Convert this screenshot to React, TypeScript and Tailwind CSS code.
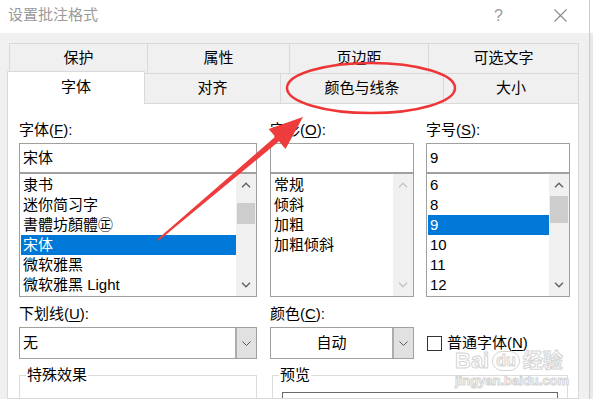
import type { ReactNode } from "react";

type Tab = { label: string; width: string };

const topTabs: Tab[] = [
  { label: "保护", width: "w-[138px]" },
  { label: "属性", width: "w-[142px]" },
  { label: "页边距", width: "w-[139px]" },
  { label: "可选文字", width: "w-[151px]" },
];

function Chevron({ up, disabled }: { up?: boolean; disabled?: boolean }) {
  return (
    <svg width="10" height="6" viewBox="0 0 10 6" aria-hidden="true">
      <polyline
        points={up ? "1,5.2 5,1.2 9,5.2" : "1,0.8 5,4.8 9,0.8"}
        fill="none"
        stroke={disabled ? "#c4c4c4" : "#606060"}
        strokeWidth="1.4"
      />
    </svg>
  );
}

function Scrollbar({
  disabled,
  thumbClass,
}: {
  disabled?: boolean;
  thumbClass?: string;
}) {
  return (
    <div className="flex w-[20px] flex-col bg-[#f0f0f0]">
      <div className="flex h-[22px] shrink-0 items-center justify-center">
        <Chevron up disabled={disabled} />
      </div>
      {thumbClass && <div className={`mx-[1px] shrink-0 bg-[#cdcdcd] ${thumbClass}`} />}
      <div className="mt-auto flex h-[22px] shrink-0 items-center justify-center">
        <Chevron disabled={disabled} />
      </div>
    </div>
  );
}

function ListBox({
  items,
  selected,
  scroll,
}: {
  items: string[];
  selected?: string;
  scroll: ReactNode;
}) {
  return (
    <div className="flex h-[124px] border border-[#a0a0a0] bg-white">
      <div className="flex-1 pt-[1px]">
        {items.map((item) => (
          <div
            key={item}
            className={
              item === selected
                ? "ml-[1px] h-[20px] whitespace-nowrap bg-[#0078d7] pl-[2px] leading-[20px] text-white"
                : "h-[20px] whitespace-nowrap pl-[3px] leading-[20px]"
            }
          >
            {item}
          </div>
        ))}
      </div>
      {scroll}
    </div>
  );
}

function Label({ text, hot }: { text: string; hot: string }) {
  return (
    <div className="h-[20px] leading-[20px]">
      {text}(<span className="underline underline-offset-2">{hot}</span>):
    </div>
  );
}

function ComboArrow() {
  return (
    <div className="flex w-[21px] items-center justify-center border-l-2 border-[#adadad] bg-[#e1e1e1]">
      <svg width="9" height="5" viewBox="0 0 9 5" aria-hidden="true">
        <polyline points="0.5,0.5 4.5,4.5 8.5,0.5" fill="none" stroke="#555" strokeWidth="1" />
      </svg>
    </div>
  );
}

export default function App() {
  return (
    <div className="relative flex h-[399px] w-[593px] overflow-hidden bg-[#f0f0f0] font-['Liberation_Sans','Noto_Sans_CJK_SC',sans-serif] text-[15px] text-black">
      <div className="flex w-[589px] flex-col">
        {/* title bar */}
        <div className="flex h-[33px] shrink-0 items-center bg-white pb-[2px] pl-[8px]">
          <span className="text-[#9a9a9a]">设置批注格式</span>
          <span className="ml-auto text-[16px] text-[#9a9a9a]">?</span>
          <svg className="ml-[51px] mr-[22px]" width="13" height="13" viewBox="0 0 13 13" aria-hidden="true">
            <path d="M0.5 0.5 L12.5 12.5 M12.5 0.5 L0.5 12.5" stroke="#8a8a8a" strokeWidth="1.1" />
          </svg>
        </div>

        <div className="flex min-h-0 flex-1 flex-col pl-[7px] pt-[10px]">
          {/* tab row 1 */}
          <div className="ml-[2px] flex h-[30px] shrink-0">
            {topTabs.map((tab, i) => (
              <div
                key={tab.label}
                className={`flex items-center justify-center border-l border-t border-[#d9d9d9] bg-[#f0f0f0] ${tab.width} ${i === topTabs.length - 1 ? "border-r" : ""}`}
              >
                {tab.label}
              </div>
            ))}
          </div>

          {/* tab row 2 */}
          <div className="flex h-[30px] shrink-0 items-start">
            <div className="relative z-10 -mt-[2px] flex h-[33px] w-[138px] items-center justify-center border-l border-r border-t border-[#d9d9d9] bg-white pb-[1px]">
              字体
            </div>
            <div className="flex h-[30px] w-[136px] items-center justify-center border-r border-t border-[#d9d9d9]">
              对齐
            </div>
            <div className="flex h-[30px] w-[163px] items-center justify-center border-r border-t border-[#d9d9d9]">
              颜色与线条
            </div>
            <div className="flex h-[30px] w-[135px] items-center justify-center border-r border-t border-[#d9d9d9]">
              大小
            </div>
          </div>

          {/* panel */}
          <div className="min-h-0 w-[572px] flex-1 shrink-0 overflow-hidden border border-[#d9d9d9] bg-white pl-[11px] pt-[16px]">
            <div className="flex">
              <div className="w-[238px]">
                <Label text="字体" hot="F" />
                <div className="mt-[3px] h-[30px] border border-[#a0a0a0] pl-[3px] leading-[28px]">
                  宋体
                </div>
                <ListBox
                  items={["隶书", "迷你简习字", "書體坊顏體㊣", "宋体", "微软雅黑", "微软雅黑 Light"]}
                  selected="宋体"
                  scroll={<Scrollbar thumbClass="mt-[7px] h-[21px]" />}
                />
              </div>
              <div className="ml-[13px] w-[144px]">
                <Label text="字形" hot="O" />
                <div className="mt-[3px] h-[30px] border border-[#a0a0a0]" />
                <ListBox
                  items={["常规", "倾斜", "加粗", "加粗倾斜"]}
                  scroll={<Scrollbar disabled />}
                />
              </div>
              <div className="ml-[12px] w-[144px]">
                <Label text="字号" hot="S" />
                <div className="mt-[3px] h-[30px] border border-[#a0a0a0] pl-[3px] leading-[28px]">
                  9
                </div>
                <ListBox
                  items={["6", "8", "9", "10", "11", "12"]}
                  selected="9"
                  scroll={<Scrollbar thumbClass="h-[27px]" />}
                />
              </div>
            </div>

            <div className="mt-[7px] flex">
              <div className="w-[238px]">
                <Label text="下划线" hot="U" />
                <div className="mt-[3px] flex h-[32px] border border-[#a0a0a0]">
                  <div className="flex-1 pl-[3px] leading-[30px]">无</div>
                  <ComboArrow />
                </div>
              </div>
              <div className="ml-[13px] w-[144px]">
                <Label text="颜色" hot="C" />
                <div className="mt-[3px] flex h-[32px] border border-[#a0a0a0]">
                  <div className="flex-1 text-center leading-[30px]">自动</div>
                  <ComboArrow />
                </div>
              </div>
              <div className="ml-[12px] flex w-[144px] items-end">
                <div className="flex h-[32px] items-center pl-[1px]">
                  <div className="h-[15px] w-[15px] border border-[#333333] bg-white" />
                  <span className="ml-[5px] whitespace-nowrap">普通字体(<span className="underline underline-offset-2">N</span>)</span>
                </div>
              </div>
            </div>

            <div className="mt-[6px] flex">
              <fieldset className="h-[40px] w-[238px] border border-[#dcdcdc]">
                <legend className="ml-[6px] px-[1px] leading-[20px]">特殊效果</legend>
              </fieldset>
              <fieldset className="ml-[15px] h-[40px] w-[296px] border border-[#dcdcdc]">
                <legend className="ml-[6px] px-[1px] leading-[20px]">预览</legend>
                <div className="ml-[9px] mt-[7px] h-[20px] w-[276px] border border-[#696969]" />
              </fieldset>
            </div>
          </div>
        </div>
      </div>

      {/* edge of the sheet behind the dialog */}
      <div className="flex flex-1 flex-col border-l border-[#cccccc] bg-[#e8e8e8]">
        <div className="h-[33px] bg-white" />
      </div>

      {/* watermark */}
      <div className="pointer-events-none absolute left-[455px] top-[351px] z-20 flex flex-col items-start text-white [-webkit-text-stroke:1px_#d4d4d4]">
        <div className="flex items-center font-bold leading-[20px]">
          <span className="text-[22px]">Bai</span>
          <span className="ml-[3px] rounded-[10px] border border-[#d4d4d4] px-[3px] text-[16px] leading-[18px]">du</span>
          <span className="ml-[3px] text-[20px]">经验</span>
        </div>
        <div className="mt-[3px] text-[13px] font-bold leading-[14px]">jingyan.baidu.com</div>
      </div>

      {/* red annotation */}
      <svg
        className="pointer-events-none absolute left-0 top-0 z-30"
        width="593"
        height="399"
        viewBox="0 0 593 399"
        aria-hidden="true"
      >
        <ellipse cx="371" cy="88" rx="84" ry="25" fill="none" stroke="#ee3636" strokeWidth="2.5" />
        <polygon
          points="157.4,239.2 275.2,136.7 268.7,129.1 303,117 285.5,148.9 279,141.3 158.6,240.8"
          fill="#ee3b3b"
        />
      </svg>
    </div>
  );
}
